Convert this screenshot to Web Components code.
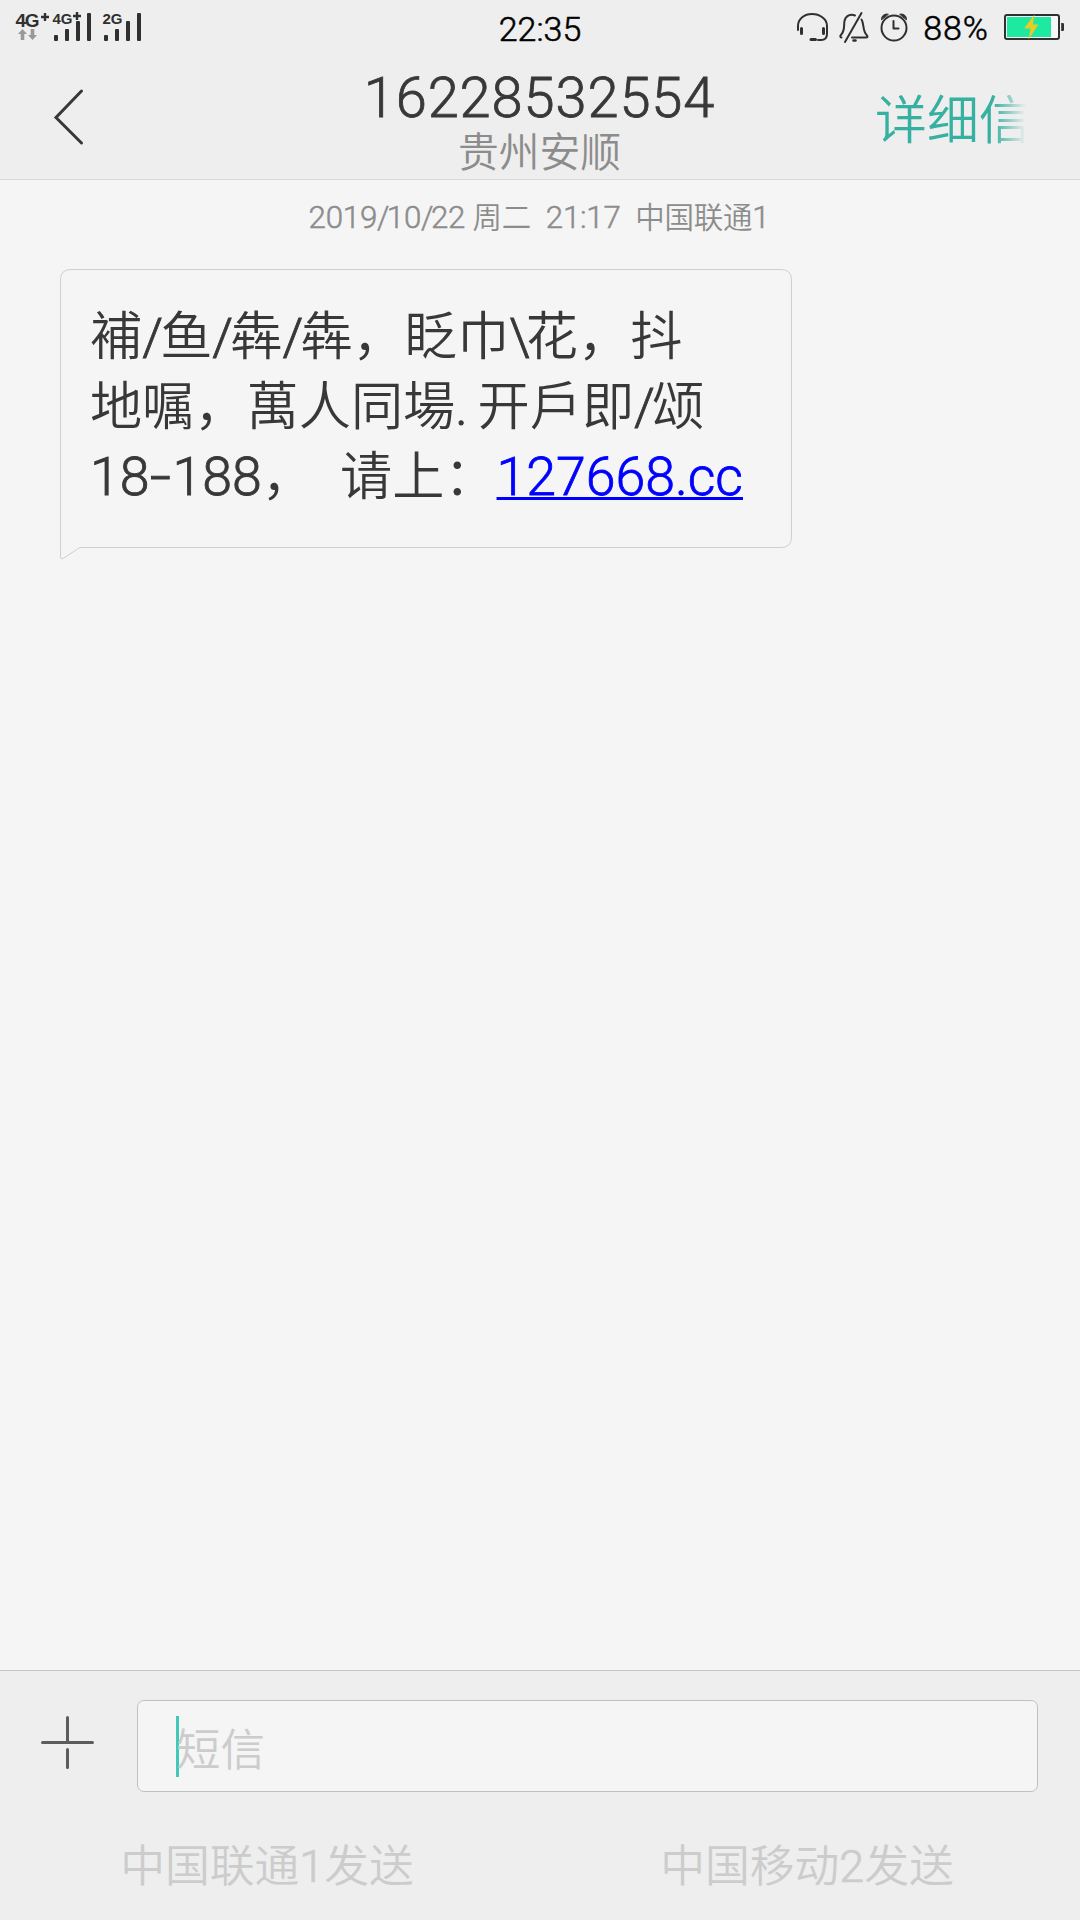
<!DOCTYPE html>
<html lang="zh-CN">
<head>
<meta charset="utf-8">
<title>短信</title>
<style>
  html, body {
    margin: 0;
    height: 100%;
  }
  body {
    background: #f5f5f5;
    font-family: Roboto, "Noto Sans CJK SC", sans-serif;
    font-weight: 350;
    color: #383838;
  }
</style>
</head>
<body>
<sms-screen>
  <status-bar slot="top" time="22:35" battery="88"></status-bar>
  <chat-header slot="top" number="16228532554" place="贵州安顺" action="详细信"></chat-header>
  <message-time>2019<text-run spacing="-2.6">/</text-run>10<text-run spacing="-2.6">/</text-run>22 <text-run cn size="29.5">周二</text-run>&nbsp; 21:17&nbsp; <text-run cn size="29.5">中国联通</text-run>1</message-time>
  <message-bubble>
    <message-line>補<text-run spacing="-2.8">/</text-run>鱼<text-run spacing="-2.8">/</text-run>犇<text-run spacing="-2.8">/</text-run>犇，眨巾<text-run spacing="-4">\</text-run>花，抖</message-line>
    <message-line>地嘱，萬人同場<text-run spacing="-1.5">. </text-run>开戶即<text-run spacing="-2.8">/</text-run>颂</message-line>
    <message-line><text-run size="53.6">18<wide-dash>-</wide-dash>188</text-run>，<text-run size="53.6">&nbsp; </text-run>请上：<message-link>127668.cc</message-link></message-line>
  </message-bubble>
  <message-composer slot="bottom" placeholder="短信">
    <send-button>中国联通<text-run>1</text-run>发送</send-button>
    <send-button>中国移动<text-run>2</text-run>发送</send-button>
  </message-composer>
</sms-screen>

<script>
class BaseElement extends HTMLElement {
  constructor() {
    super();
    const shadow = this.attachShadow({ mode: "open" });
    const template = document.createElement("template");
    template.innerHTML = `<style>${this.css()}</style>${this.html()}`;
    shadow.appendChild(template.content.cloneNode(true));
  }

  css() {
    return "";
  }

  html() {
    return "<slot></slot>";
  }

  attributeChangedCallback(name, oldValue, newValue) {
    const target = this.shadowRoot.querySelector("." + name);
    if (target) target.textContent = newValue;
  }
}

class SmsScreen extends BaseElement {
  css() {
    return `
      :host {
        display: flex;
        flex-direction: column;
        width: 1080px;
        height: 1920px;
        overflow: hidden;
      }
      main {
        flex: 1;
      }
    `;
  }

  html() {
    return `<slot name="top"></slot><main><slot></slot></main><slot name="bottom"></slot>`;
  }
}

// inline text with its own size and tracking, latin is drawn a bit heavier
class TextRun extends BaseElement {
  static observedAttributes = ["size", "spacing"];

  css() {
    return `
      :host { display: inline; line-height: 0; -webkit-text-stroke: 0.016em currentColor; }
      :host([cn]) { -webkit-text-stroke: 0; }
    `;
  }

  attributeChangedCallback(name, oldValue, newValue) {
    if (name === "size") this.style.fontSize = newValue + "px";
    if (name === "spacing") this.style.letterSpacing = newValue + "px";
  }
}

class SignalBars extends BaseElement {
  static observedAttributes = ["label"];

  css() {
    return `
      :host { display: block; height: 54px; }
      svg { display: block; }
      text { font: bold 15px "Liberation Sans", sans-serif; fill: #303030; }
      rect { fill: #303030; }
    `;
  }

  html() {
    return `
      <svg width="42" height="54">
        <rect x="3" y="35" width="4" height="6" rx="1"/>
        <rect x="14" y="29" width="4" height="12" rx="1"/>
        <rect x="25" y="21" width="4" height="20" rx="1"/>
        <rect x="36" y="13" width="4" height="28" rx="1"/>
        <text class="label" x="1.5" y="24"></text>
        <path class="plus" d="M22 16h8M26 12v8" stroke="#303030" stroke-width="2.4"/>
      </svg>
    `;
  }

  connectedCallback() {
    if (!this.hasAttribute("plus")) {
      this.shadowRoot.querySelector(".plus").remove();
    }
  }
}

class StatusBar extends BaseElement {
  static observedAttributes = ["time", "battery"];

  css() {
    return `
      :host {
        display: grid;
        grid-template-columns: 1fr auto 1fr;
        height: 54px;
        box-sizing: border-box;
        background: #eeeeee;
        color: #000;
        font-size: 34px;
        line-height: 59px;
      }
      svg { display: block; }
      .left, .right { display: flex; height: 54px; }
      .left { padding-left: 14px; }
      .left svg { margin-right: -3px; }
      .time, .level { -webkit-text-stroke: 0.55px #000; }
      signal-bars + signal-bars { margin-left: 8px; }
      .right { justify-content: flex-end; padding-right: 15px; }
      .level { line-height: 56px; margin: 0 15px 0 14px; letter-spacing: 1px; }
      .net { font: bold 19px "Liberation Sans", sans-serif; fill: #303030; }
      .icon { fill: none; stroke: #303030; stroke-width: 2; stroke-linecap: round; stroke-linejoin: round; }
    `;
  }

  html() {
    return `
      <div class="left">
        <svg width="40" height="54">
          <text class="net" x="1.5" y="27" textLength="24">4G</text>
          <path d="M27 17h8M31 13v8" stroke="#303030" stroke-width="2.4"/>
          <path d="M8.500 29l4.500 5h-2.700v6h-3.600v-6h-2.700zM18.500 40l-4.500-5h2.700v-6h3.600v6h2.700z" fill="#999"/>
        </svg>
        <signal-bars label="4G" plus></signal-bars>
        <signal-bars label="2G"></signal-bars>
      </div>
      <div class="time"></div>
      <div class="right">
        <svg class="icon" width="114" height="54">
          <path d="M3 30V26C3 18.500 9.500 14 17 14S32 18.500 32 26V34Q32 40 26 40H23"/>
          <path d="M6.500 28.500v5M28.500 28.500v5M16 39.500h4.500" stroke-width="3"/>
          <path d="M60 15.500C55 13.500 50.500 16 49.500 21C48.500 26 50.500 30.500 45.500 35.500C45 36.500 45.500 37.500 46.500 37.500M57 37.500H71C72.500 37.500 73 36.500 72 35.500C67 30.500 69.500 24 66.500 19.500M66.500 13L50 42"/>
          <path d="M58.500 40.500h2" stroke-width="2.500"/>
          <circle cx="99" cy="28" r="12.500"/>
          <path d="M98.500 21v7.500h5"/>
          <path d="M86.500 19.500A5 5 0 0 1 93 14.200ZM111.500 19.500A5 5 0 0 0 105 14.200Z" fill="#303030" stroke-width="1"/>
        </svg>
        <div class="level"><span class="battery"></span>%</div>
        <svg width="61" height="54">
          <rect x="1" y="15" width="54" height="24" rx="2" fill="#fff" fill-opacity=".5" stroke="#303030" stroke-width="2"/>
          <rect x="3" y="17" width="44" height="20" fill="#1de9a0"/>
          <path d="M57.200 23h1.500q1.300 0 1.300 1.300v5.400q0 1.300-1.300 1.300h-1.500z" fill="#303030"/>
          <path d="M30.500 14.500L20 28.500H26.500L24.500 39.500L34.500 24.500H28.800Z" fill="#e8cc26"/>
        </svg>
      </div>
    `;
  }
}

class ChatHeader extends BaseElement {
  static observedAttributes = ["number", "place", "action"];

  css() {
    return `
      :host {
        display: grid;
        grid-template-columns: 204px 1fr 205px;
        height: 126px;
        box-sizing: border-box;
        border-bottom: 1px solid #d9d9d9;
        background: #eeeeee;
      }
      svg { display: block; }
      .title { text-align: center; padding-top: 14px; }
      .number {
        font-size: 56px;
        line-height: 60px;
        letter-spacing: 0.9px;
        -webkit-text-stroke: 0.8px currentColor;
      }
      .place { font-size: 40.800px; line-height: 51px; color: #8c8c8c; }
      .action {
        justify-self: start;
        white-space: nowrap;
        font-size: 51.900px;
        line-height: 136px;
        height: 125px;
        color: #36b0a0;
        -webkit-mask-image: linear-gradient(to right, #000 118px, transparent 151px);
        mask-image: linear-gradient(to right, #000 118px, transparent 151px);
      }
    `;
  }

  html() {
    return `
      <svg width="204" height="125">
        <path d="M81.500 37L56 63.500L81.500 89" fill="none" stroke="#383838" stroke-width="3" stroke-linecap="round"/>
      </svg>
      <div class="title">
        <div class="number"></div>
        <div class="place"></div>
      </div>
      <div class="action"></div>
    `;
  }
}

class MessageTime extends BaseElement {
  css() {
    return `
      :host {
        display: block;
        height: 89px;
        line-height: 76px;
        font-size: 31.300px;
        letter-spacing: -0.25px;
        text-align: center;
        text-indent: -2px;
        white-space: pre;
        color: #8c8c8c;
        -webkit-text-stroke: 0.5px currentColor;
      }
    `;
  }
}

class MessageBubble extends BaseElement {
  css() {
    return `
      :host {
        display: block;
        position: relative;
        width: 732px;
        height: 291px;
        box-sizing: border-box;
        margin-left: 60px;
        padding: 34px 0 0 30px;
      }
      svg { position: absolute; left: 0; top: 0; }
    `;
  }

  html() {
    return `
      <svg width="732" height="291">
        <path d="M.5 289V11Q.5 .5 11 .5H721Q731.500 .5 731.500 11V268Q731.500 278.500 721 278.500H20L3 289.500Q.5 290.500 .5 288Z" fill="none" stroke="#cfcfcf"/>
      </svg>
      <slot></slot>
    `;
  }
}

class MessageLine extends BaseElement {
  css() {
    return `
      :host {
        display: block;
        height: 70px;
        line-height: 70px;
        font-size: 52.200px;
        white-space: pre;
      }
    `;
  }
}

class WideDash extends BaseElement {
  css() {
    return `
      :host {
        display: inline-block;
        width: 23px;
        line-height: 0;
        text-align: center;
        transform: scaleX(1.4);
      }
    `;
  }
}

class MessageLink extends BaseElement {
  css() {
    return `
      :host {
        color: #0000ff;
        font-size: 53.600px;
        line-height: 0;
        text-decoration: underline;
        text-decoration-thickness: 3px;
        text-underline-offset: 2px;
        text-decoration-skip-ink: none;
        -webkit-text-stroke: 0.8px #0000ff;
      }
    `;
  }
}

class MessageComposer extends BaseElement {
  static observedAttributes = ["placeholder"];

  css() {
    return `
      :host {
        display: block;
        height: 250px;
        box-sizing: border-box;
        border-top: 1px solid #c4c4c4;
        background: #eeeeee;
      }
      .row { display: flex; padding: 29px 42px 0 41px; }
      .row svg { margin: 16px 43px 0 0; }
      .field {
        flex: 1;
        display: flex;
        height: 92px;
        box-sizing: border-box;
        padding: 15px 0 0 38px;
        border: 1px solid #c0c0c0;
        border-radius: 7px;
        background: #f5f5f5;
      }
      .caret { width: 3px; height: 61px; background: #40c8b8; }
      .placeholder { margin-left: -3px; font-size: 44.500px; line-height: 70px; color: #cccccc; }
      .buttons { display: flex; width: 1080px; margin-left: -3px; padding-top: 37px; }
    `;
  }

  html() {
    return `
      <div class="row">
        <svg width="53" height="53">
          <path d="M1.500 26.500h50M26.500 1.500v25M26.500 33.500v18" stroke="#5c5c5c" stroke-width="3" stroke-linecap="round"/>
        </svg>
        <div class="field"><div class="caret"></div><div class="placeholder"></div></div>
      </div>
      <div class="buttons"><slot></slot></div>
    `;
  }
}

class SendButton extends BaseElement {
  css() {
    return `
      :host {
        flex: 1;
        display: block;
        text-align: center;
        font-size: 44.800px;
        line-height: 76px;
        color: #cccccc;
      }
    `;
  }
}

customElements.define("sms-screen", SmsScreen);
customElements.define("text-run", TextRun);
customElements.define("signal-bars", SignalBars);
customElements.define("status-bar", StatusBar);
customElements.define("chat-header", ChatHeader);
customElements.define("message-time", MessageTime);
customElements.define("message-bubble", MessageBubble);
customElements.define("message-line", MessageLine);
customElements.define("wide-dash", WideDash);
customElements.define("message-link", MessageLink);
customElements.define("message-composer", MessageComposer);
customElements.define("send-button", SendButton);
</script>
</body>
</html>
